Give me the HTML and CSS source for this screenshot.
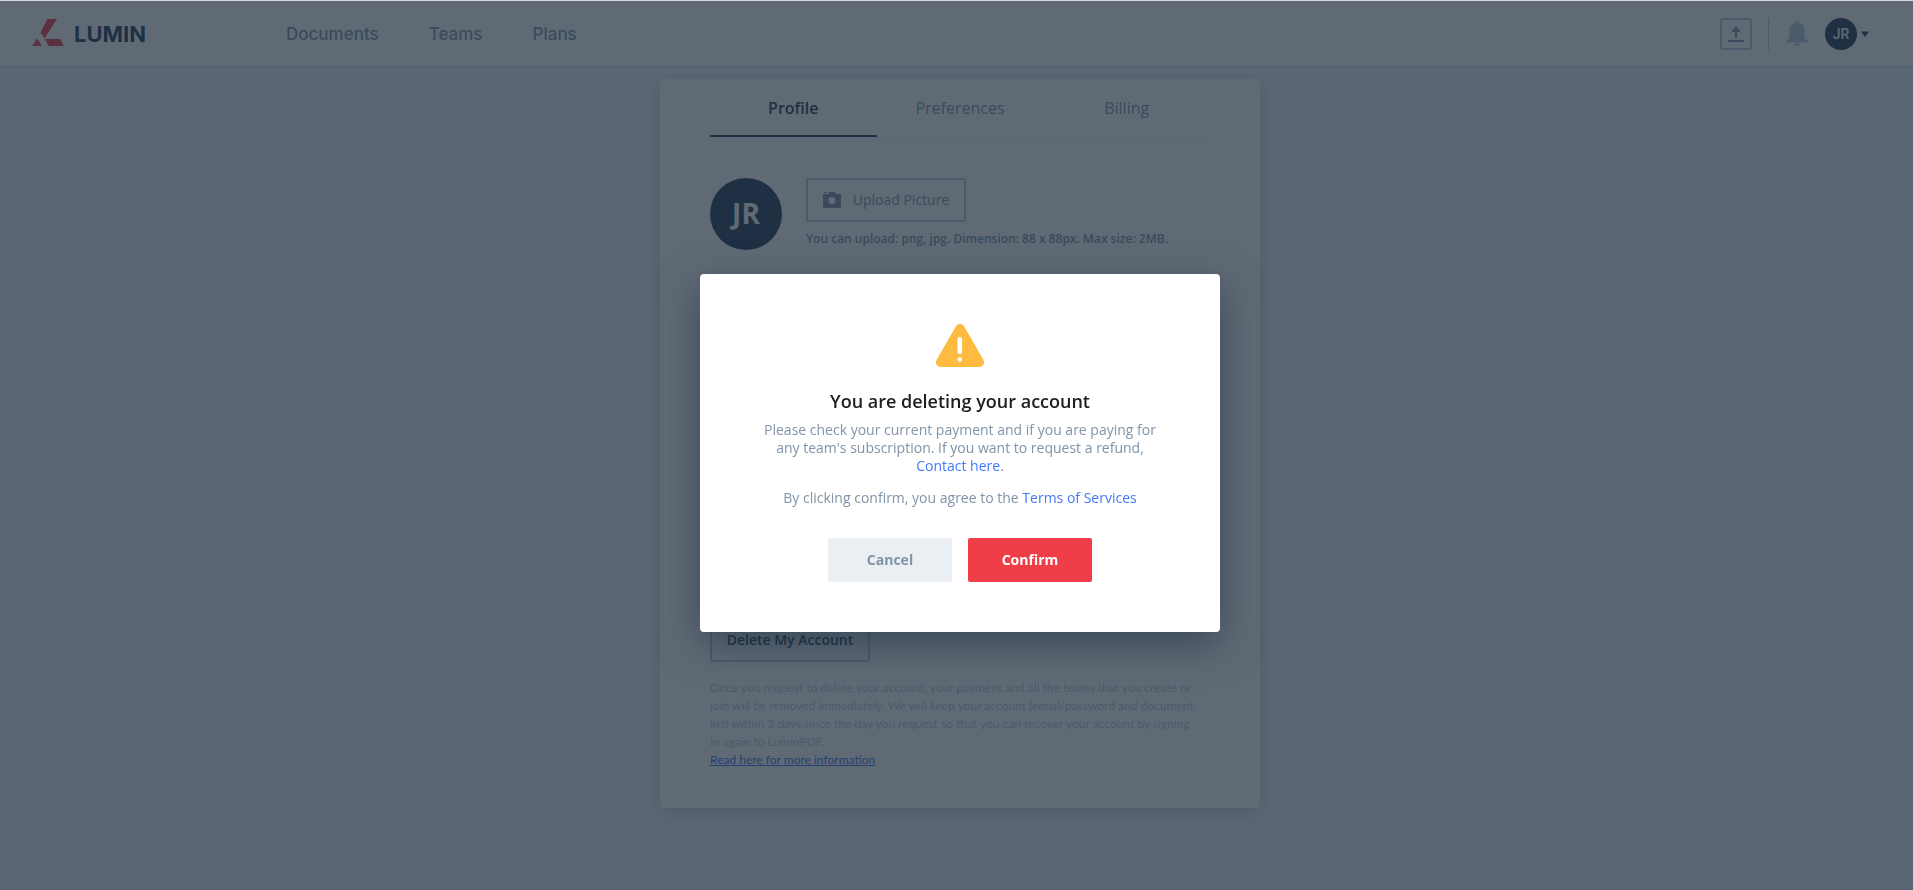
FILE: index.html
```html
<!DOCTYPE html>
<html lang="en">
<head>
<meta charset="utf-8">
<title>Lumin - Profile</title>
<link rel="stylesheet" href="styles.css">
</head>
<body>
<header class="header">
  <a class="logo" href="#">
    <svg class="logo-mark" viewBox="0 0 32 27" aria-hidden="true"><path d="M15.500 0H25L12.500 19.500 8.500 13.500ZM12.500 20H28L32 27H17ZM5 19.500L10 27H0Z"/></svg>
    <span>LUMIN</span>
  </a>
  <nav class="nav">
    <a href="#">Documents</a>
    <a href="#">Teams</a>
    <a href="#">Plans</a>
  </nav>
  <div class="tools">
    <button class="tool" aria-label="Upload">
      <svg width="32" height="32" viewBox="0 0 32 32"><rect x="1" y="1" width="30" height="30" rx="2.500" fill="none" stroke="#bacbe2" stroke-width="2"/><path d="M16 8L21 14H17V20H15V14H11ZM8 22H24V24H8Z" fill="#8799b3"/></svg>
    </button>
    <span class="divider"></span>
    <button class="tool bell" aria-label="Notifications">
      <svg width="22" height="26" viewBox="0 0 22 26"><path d="M11 0C12 0 12.600.800 12.600 2 16.500 2.800 18.500 5.500 18.500 9.500V16.500L21.500 20V21.500H.500V20L3.500 16.500V9.500C3.500 5.500 5.500 2.800 9.400 2 9.400.800 10 0 11 0ZM8 22.500H14C13.500 24.300 12.500 25.500 11 25.500S8.500 24.300 8 22.500Z" fill="#bacbe2"/></svg>
    </button>
    <button class="tool account" aria-label="Account menu">
      <span class="avatar">JR</span>
      <svg width="8" height="6" viewBox="0 0 8 6"><path d="M0 .500H8L4 6Z" fill="#263a5c"/></svg>
    </button>
  </div>
</header>

<main class="page">
  <section class="card">
    <nav class="tabs">
      <a class="tab active" href="#">Profile</a>
      <a class="tab" href="#">Preferences</a>
      <a class="tab" href="#">Billing</a>
    </nav>
    <div class="picture">
      <span class="avatar large">JR</span>
      <div>
        <button class="outline upload">
          <svg width="18" height="16" viewBox="0 0 18 16"><path fill-rule="evenodd" d="M1 0H4V1H1ZM6 0H12L13 2H18V16H0V2H5ZM9 5A3.500 3.500 0 1 0 9 12 3.500 3.500 0 0 0 9 5Z" fill="#7f93ab"/></svg>
          Upload Picture
        </button>
        <p class="hint">You can upload: png, jpg. Dimension: 88 x 88px. Max size: 2MB.</p>
      </div>
    </div>
    <div class="removal">
      <button class="outline delete">Delete My Account</button>
      <p class="notice">Once you request to delete your account, your payment and all the teams that you create or<br>join will be removed immediately. We will keep your account (email/password and document<br>list) within 3 days since the day you request so that you can recover your account by signing<br>in again to LuminPDF.<br><a href="#">Read here for more information</a></p>
    </div>
  </section>
</main>

<div class="overlay">
  <div class="modal" role="dialog" aria-modal="true" aria-labelledby="modal-title">
    <svg class="warning" width="48" height="44" viewBox="0 0 48 44" aria-hidden="true"><path d="M19.800 2.500C21.700-.800 26.300-.800 28.200 2.500L47.200 35.500C49.300 39.200 47.200 43 43.200 43H4.800C.800 43-1.300 39.200.800 35.500Z" fill="#ffbb40"/><rect x="21.500" y="13" width="4.600" height="17" rx="2.300" fill="#fff"/><circle cx="23.800" cy="35.500" r="2.300" fill="#fff"/></svg>
    <h1 id="modal-title">You are deleting your account</h1>
    <p>Please check your current payment and if you are paying for<br>any team's subscription. If you want to request a refund,<br><a href="#">Contact here</a>.</p>
    <p>By clicking confirm, you agree to the <a href="#">Terms of Services</a></p>
    <div class="actions">
      <button class="cancel">Cancel</button>
      <button class="confirm">Confirm</button>
    </div>
  </div>
</div>
</body>
</html>
```
FILE: styles.css
```css
* { box-sizing: border-box; }

body {
  margin: 0;
  min-height: 100vh;
  background: #eff3fa;
  color: #263a5c;
  font: 14px/18px "Open Sans", "Noto Sans", sans-serif;
}

p, h1 { margin: 0; }
a { color: inherit; text-decoration: none; }
button { border: 0; padding: 0; background: none; color: inherit; font: inherit; cursor: pointer; }
svg { display: block; flex: none; }

.header {
  display: flex;
  align-items: center;
  height: 67px;
  padding: 0 44px 0 32px;
  background: #fff;
  border-top: 1px solid #d4d8dc;
  border-bottom: 1px solid #ccd8e6;
}

.logo { display: flex; align-items: center; gap: 10px; width: 254px; font: 700 22px/28px Inter, sans-serif; }
.logo-mark { width: 32px; height: 27px; margin-bottom: 2px; fill: #ee3e50; }
.nav { display: flex; gap: 50px; color: #8094ad; font: 500 17px/24px Inter, sans-serif; }
.tools { display: flex; align-items: center; margin-left: auto; }
.divider { width: 1px; height: 32px; margin: 0 17px 0 16px; background: #bacbe2; }
.account { display: flex; align-items: center; gap: 4px; margin-left: 17px; }

.avatar {
  display: grid;
  place-items: center;
  width: 32px;
  height: 32px;
  border-radius: 50%;
  background: #263a5c;
  color: #fff;
  font: 500 14px/18px Roboto, sans-serif;
}
.avatar.large { width: 72px; height: 72px; padding-bottom: 2px; font: 700 28px/36px "Open Sans", sans-serif; }

.page { display: flex; justify-content: center; padding: 12px 0 40px 7px; }
.card {
  width: 600px;
  padding: 0 50px 39px;
  border-radius: 4px;
  background: #fff;
  box-shadow: 0 4px 16px rgba(38, 58, 92, .2);
}

.tabs { display: flex; border-bottom: 1px solid #eaf0f8; }
.tab { flex: 1; height: 58px; padding-top: 17px; color: #8094ad; font-size: 16px; line-height: 24px; text-align: center; }
.tab.active { border-bottom: 2px solid #263a5c; color: #263a5c; font-weight: 600; }

.picture { display: flex; gap: 24px; margin-top: 40px; }
.outline { display: flex; align-items: center; justify-content: center; width: 160px; height: 44px; border: 2px solid #bacbe2; border-radius: 2px; }
.upload { gap: 12px; color: #8094ad; }
.hint { margin-top: 8px; color: #8094ad; font-size: 12px; font-weight: 600; }

.removal { margin-top: 368px; }
.delete { font-weight: 600; }
.notice { margin-top: 17px; color: #bacbe2; font: 12px/18px Lato, sans-serif; }
.notice a { color: #3870f0; text-decoration: underline; }

.overlay {
  position: fixed;
  inset: 1px 0 0;
  display: flex;
  align-items: center;
  justify-content: center;
  padding: 15px 0 0 7px;
  background: rgba(28, 43, 59, .7);
}
.modal {
  display: flex;
  flex-direction: column;
  align-items: center;
  width: 520px;
  padding: 50px;
  border-radius: 4px;
  background: #fff;
  box-shadow: 0 12px 40px rgba(30, 48, 66, .6);
  color: #8094a8;
  text-align: center;
}
.modal h1 { margin: 21px 0 8px; color: #1e1e1e; font-size: 18px; font-weight: 600; line-height: 24px; }
.modal p + p { margin-top: 14px; }
.modal a { color: #4279ff; }
.actions { display: flex; gap: 16px; margin-top: 31px; }
.actions button { width: 124px; height: 44px; border-radius: 2px; font-weight: 700; }
.cancel { background: #eaeff4; }
.actions .confirm { background: #f03e48; color: #fff; }
```
